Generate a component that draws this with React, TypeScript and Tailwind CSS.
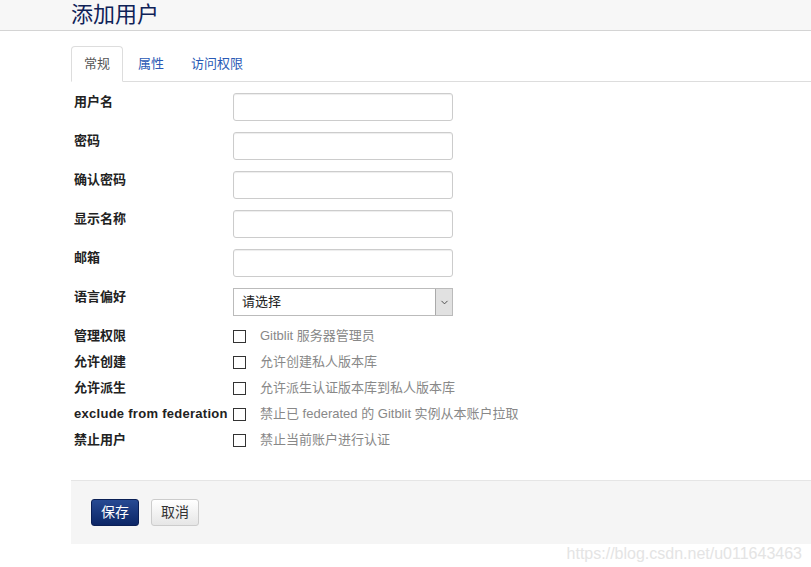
import { ChevronDown } from 'lucide-react';

const fields = ['用户名', '密码', '确认密码', '显示名称', '邮箱'];

const checks = [
  { label: '管理权限', text: 'Gitblit 服务器管理员' },
  { label: '允许创建', text: '允许创建私人版本库' },
  { label: '允许派生', text: '允许派生认证版本库到私人版本库' },
  { label: 'exclude from federation', text: '禁止已 federated 的 Gitblit 实例从本账户拉取' },
  { label: '禁止用户', text: '禁止当前账户进行认证' },
];

export default function App() {
  return (
    <div
      className="w-[811px] h-[567px] overflow-hidden bg-white text-[13px] text-[#333]"
      style={{ fontFamily: '"Liberation Sans", "Noto Sans CJK SC", sans-serif' }}
    >
      <div className="h-[31px] bg-[#f7f7f7] border-b border-[#d4d4d4] pl-[71px]">
        <h1 className="text-[22px] leading-[29px] text-[#0f2257]">添加用户</h1>
      </div>

      <div className="pl-[71px]">
        <div className="mt-[15px] flex h-[36px] border-b border-[#ddd]">
          <div className="h-[36px] px-[12px] border border-[#ddd] border-b-white rounded-t-[4px] bg-white flex items-center text-[#555] -mb-px">
            常规
          </div>
          <div className="px-[15px] flex items-center text-[#2a5ab5]">属性</div>
          <div className="px-[12px] flex items-center text-[#2a5ab5]">访问权限</div>
        </div>

        <div className="pt-[11px] pl-[3px]">
          {fields.map((f) => (
            <div key={f} className="flex h-[39px]">
              <div className="w-[159px] -mt-[1px] font-bold text-[#222]">{f}</div>
              <input
                type={f.includes('密码') ? 'password' : 'text'}
                className="w-[220px] h-[28px] border border-[#ccc] rounded-[3px] bg-white shadow-[inset_0_1px_1px_rgba(0,0,0,0.075)] outline-none"
              />
            </div>
          ))}
          <div className="flex h-[35px]">
            <div className="w-[159px] -mt-[1px] font-bold text-[#222]">语言偏好</div>
            <div className="w-[220px] h-[28px] border border-[#bbb] bg-white flex items-stretch">
              <div className="flex-1 pl-[8px] flex items-center text-[#222]">请选择</div>
              <div className="w-[17px] bg-[#e1e1e1] border-l border-[#aaa] flex items-center justify-center">
                <ChevronDown className="w-[11px] h-[11px] text-[#444]" strokeWidth={2} />
              </div>
            </div>
          </div>
          {checks.map((c) => (
            <div key={c.label} className="flex items-center h-[26px]">
              <div
                className={
                  c.label.startsWith('exclude')
                    ? 'w-[159px] font-bold text-[#222] whitespace-nowrap tracking-[0.28px]'
                    : 'w-[159px] font-bold text-[#222] whitespace-nowrap'
                }
              >
                {c.label}
              </div>
              <span className="w-[13px] h-[13px] border border-[#333] bg-white" />
              <span className="ml-[14px] text-[#888]">{c.text}</span>
            </div>
          ))}
        </div>

        <div className="mt-[27px] h-[64px] bg-[#f5f5f5] border-t border-[#e5e5e5] pl-[20px] flex items-center gap-[12px]">
          <button className="w-[48px] h-[27px] rounded-[3px] text-white text-[14px] bg-gradient-to-b from-[#274a93] to-[#0c2666] border border-[#0a1f55]">
            保存
          </button>
          <button className="w-[48px] h-[27px] rounded-[3px] text-[#333] text-[14px] bg-gradient-to-b from-white to-[#e6e6e6] border border-[#ccc]">
            取消
          </button>
        </div>
        <div className="flex justify-end pr-[9px] mt-[-2px] text-[16px] text-[#e4e4e4]" style={{ fontFamily: 'Arial, "Liberation Sans", sans-serif' }}>
          https://blog.csdn.net/u011643463
        </div>
      </div>
    </div>
  );
}
